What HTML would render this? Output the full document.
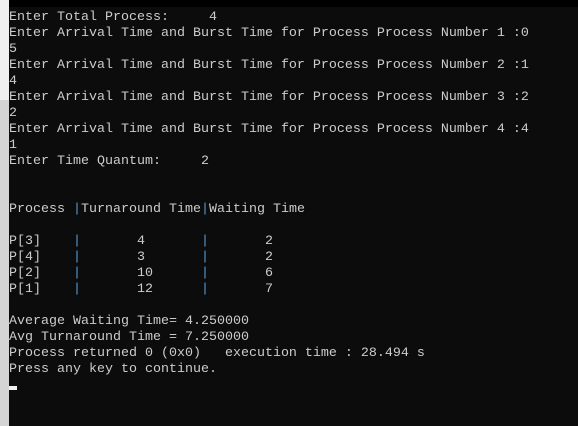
<!DOCTYPE html>
<html><head><meta charset="utf-8"><style>
html,body{margin:0;padding:0;width:578px;height:426px;overflow:hidden;background:#0c0c0c}
#left{position:absolute;left:0;top:0;width:9px;height:426px;background:linear-gradient(#f0f0f0 0,#f0f0f0 100px,#d4d4d4 100px,#d4d4d4 426px)}
#top{position:absolute;left:9px;top:0;width:569px;height:7px;background:#000}
pre{position:absolute;left:9px;top:10px;margin:0;font-family:"Liberation Mono",monospace;font-size:13.33px;line-height:16px;color:#cccccc}
b{font-weight:normal;color:#5a9ad6}
#cur{position:absolute;left:9px;top:386px;width:8px;height:4px;background:#f0f0f0}
</style></head><body>
<div id="left"></div><div id="top"></div>
<pre>Enter Total Process:     4
Enter Arrival Time and Burst Time for Process Process Number 1 :0
5
Enter Arrival Time and Burst Time for Process Process Number 2 :1
4
Enter Arrival Time and Burst Time for Process Process Number 3 :2
2
Enter Arrival Time and Burst Time for Process Process Number 4 :4
1
Enter Time Quantum:     2


Process <b>|</b>Turnaround Time<b>|</b>Waiting Time

P[3]    <b>|</b>       4       <b>|</b>       2
P[4]    <b>|</b>       3       <b>|</b>       2
P[2]    <b>|</b>       10      <b>|</b>       6
P[1]    <b>|</b>       12      <b>|</b>       7

Average Waiting Time= 4.250000
Avg Turnaround Time = 7.250000
Process returned 0 (0x0)   execution time : 28.494 s
Press any key to continue.</pre>
<div id="cur"></div>
</body></html>
